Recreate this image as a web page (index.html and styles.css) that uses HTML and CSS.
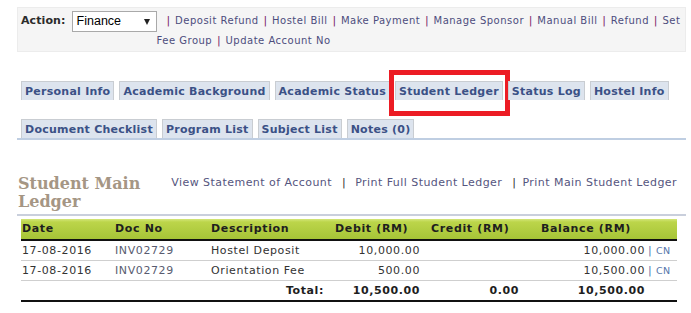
FILE: index.html
```html
<!DOCTYPE html>
<html>
<head>
<meta charset="utf-8">
<link rel="stylesheet" href="styles.css">
</head>
<body>
<div class="action-bar">
  <span class="action-label">Action:</span>
  <div class="select"><span>Finance</span><span class="arrow"></span></div>
  <div class="action-links"><span class="sep first">|</span><a>Deposit Refund</a><span class="sep">|</span><a>Hostel Bill</a><span class="sep">|</span><a>Make Payment</a><span class="sep">|</span><a>Manage Sponsor</a><span class="sep">|</span><a>Manual Bill</a><span class="sep">|</span><a>Refund</a><span class="sep">|</span><a>Set Fee Group</a><span class="sep">|</span><a>Update Account No</a></div>
</div>

<div class="tabs">
  <div class="tab-row">
    <span class="tab">Personal Info</span>
    <span class="tab">Academic Background</span>
    <span class="tab">Academic Status</span>
    <span class="tab highlighted">Student Ledger</span>
    <span class="tab">Status Log</span>
    <span class="tab">Hostel Info</span>
  </div>
  <div class="tab-row">
    <span class="tab">Document Checklist</span>
    <span class="tab">Program List</span>
    <span class="tab">Subject List</span>
    <span class="tab">Notes (0)</span>
  </div>
</div>

<div class="section-head">
  <h2 class="title">Student Main Ledger</h2>
  <div class="head-links"><a>View Statement of Account</a><span class="hsep">|</span><a>Print Full Student Ledger</a><span class="hsep2">|</span><a>Print Main Student Ledger</a></div>
</div>

<table class="ledger">
  <colgroup>
    <col class="c-date"><col class="c-doc"><col class="c-desc"><col class="c-debit"><col class="c-credit"><col class="c-bal"><col class="c-cn">
  </colgroup>
  <thead>
    <tr>
      <th class="hdate">Date</th>
      <th class="hdoc">Doc No</th>
      <th class="hdesc">Description</th>
      <th class="hdebit">Debit (RM)</th>
      <th class="hcredit">Credit (RM)</th>
      <th class="hbal">Balance (RM)</th>
      <th></th>
    </tr>
  </thead>
  <tbody>
    <tr>
      <td class="date">17-08-2016</td>
      <td class="doc">INV02729</td>
      <td class="desc">Hostel Deposit</td>
      <td class="num debit">10,000.00</td>
      <td class="num credit"></td>
      <td class="num bal">10,000.00</td>
      <td class="cn"><span class="cnsep">|</span>CN</td>
    </tr>
    <tr>
      <td class="date">17-08-2016</td>
      <td class="doc">INV02729</td>
      <td class="desc">Orientation Fee</td>
      <td class="num debit">500.00</td>
      <td class="num credit"></td>
      <td class="num bal">10,500.00</td>
      <td class="cn"><span class="cnsep">|</span>CN</td>
    </tr>
    <tr class="total">
      <td></td>
      <td></td>
      <td class="num tlabel">Total:</td>
      <td class="num debit">10,500.00</td>
      <td class="num credit">0.00</td>
      <td class="num bal">10,500.00</td>
      <td></td>
    </tr>
  </tbody>
</table>
</body>
</html>
```

FILE: styles.css
```css
html, body {
  margin: 0;
  padding: 0;
  background: #ffffff;
}

body {
  font-family: "DejaVu Sans", Verdana, sans-serif;
  font-size: 11px;
  color: #333333;
  width: 691px;
}

a {
  color: #50507c;
  text-decoration: none;
}

.action-bar {
  display: flex;
  align-items: flex-start;
  margin: 7px 5px 0 17px;
  height: 45px;
  box-sizing: border-box;
  padding: 3px 0 0 3px;
  background: #f5f5f5;
  border: 1px solid #ececec;
}

.action-label {
  font-weight: bold;
  color: #2b2b2b;
  line-height: 20px;
  letter-spacing: 0.1px;
}

.select {
  margin-left: 6px;
  width: 85px;
  height: 21px;
  box-sizing: border-box;
  border: 1px solid #a9a9a9;
  background: #ffffff;
  font-family: "Liberation Sans", Arial, sans-serif;
  font-size: 12.5px;
  line-height: 19px;
  color: #000000;
  padding-left: 4px;
  display: flex;
  justify-content: space-between;
  align-items: center;
}

.arrow {
  width: 0;
  height: 0;
  margin-right: 6px;
  border-left: 3.5px solid transparent;
  border-right: 3.5px solid transparent;
  border-top: 6px solid #222222;
}

.action-links {
  flex: 1;
  line-height: 20px;
  font-size: 10px;
  letter-spacing: 0.5px;
  padding-right: 0;
}

.action-links a {
  color: #4d4d7d;
  line-height: 13px;
}

.sep {
  color: #7b1f6b;
  margin: 0 4.8px;
  font-size: 11px;
  line-height: 13px;
  letter-spacing: 0;
}

.sep.first {
  margin-left: 10px;
}

.tabs {
  margin: 29px 5px 0 17px;
  padding-left: 4px;
  border-bottom: 2px solid #bfcee2;
}

.tab-row {
  display: flex;
  gap: 5px;
}

.tab-row + .tab-row {
  margin-top: 19px;
}

.tab {
  position: relative;
  height: 19px;
  box-sizing: border-box;
  padding: 0 3px 0 3px;
  background: #dde4ee;
  border: 1px solid #c9cdd2;
  border-bottom: none;
  font-weight: bold;
  font-size: 11px;
  letter-spacing: 0.25px;
  line-height: 19px;
  color: #3b5186;
  white-space: nowrap;
}

.highlighted::after {
  content: "";
  position: absolute;
  left: -7px;
  top: -12px;
  right: -8px;
  bottom: -16px;
  border: 5px solid #ec1c24;
}

.section-head {
  display: flex;
  align-items: flex-start;
  margin: 35px 5px 0 17px;
  padding-bottom: 3px;
  border-bottom: 2px solid #c9cfdc;
}

.title {
  margin: 0;
  width: 150px;
  padding-left: 1px;
  font-family: "DejaVu Serif", Georgia, serif;
  font-weight: bold;
  font-size: 16px;
  line-height: 18px;
  color: #a59684;
}

.head-links {
  flex: 1;
  text-align: right;
  padding-right: 9px;
  line-height: 16px;
  letter-spacing: 0.45px;
  white-space: nowrap;
}

.head-links a {
  color: #55557e;
}

.hsep {
  margin: 0 9px 0 10px;
  color: #333333;
}

.hsep2 {
  margin: 0 6px 0 10px;
  color: #333333;
}

.ledger {
  margin: 3px 0 0 21px;
  width: 656px;
  table-layout: fixed;
  border-collapse: separate;
  border-spacing: 0;
}

.c-date { width: 93px; }
.c-doc { width: 94px; }
.c-desc { width: 118px; }
.c-debit { width: 98px; }
.c-credit { width: 100px; }
.c-bal { width: 121px; }
.c-cn { width: 32px; }

.ledger th {
  padding: 0;
  line-height: 20px;
  background: linear-gradient(#d3e679 0px, #bcd54a 3px, #a6c437 100%);
  border-bottom: 2px solid #111111;
  font-weight: bold;
  font-size: 11px;
  letter-spacing: 0.65px;
  color: #1e1e1e;
  text-align: left;
  white-space: nowrap;
}

.ledger th.hdate { padding-left: 1px; }
.ledger th.hdoc { padding-left: 1px; }
.ledger th.hdesc { padding-left: 3px; }
.ledger th.hdebit { padding-left: 9px; }
.ledger th.hcredit { padding-left: 7px; }
.ledger th.hbal { padding-left: 17px; }

.ledger td {
  padding: 0;
  line-height: 19px;
  border-bottom: 1px solid #cfcfcf;
  font-size: 11px;
  letter-spacing: 0.6px;
  color: #333333;
  white-space: nowrap;
}

.ledger td.date { padding-left: 1px; }
.ledger td.doc { padding-left: 1px; color: #585c70; }
.ledger td.desc { padding-left: 3px; }

.ledger td.num { text-align: right; }
.ledger td.debit { padding-right: 4px; }
.ledger td.credit { padding-right: 5px; }
.ledger td.bal { padding-right: 0; }
.ledger td.tlabel { padding-right: 2px; }

.ledger td.cn {
  font-size: 9.5px;
  letter-spacing: 0.3px;
  color: #5576ab;
}

.cnsep {
  margin: 0 4px 0 3px;
  color: #5576ab;
  font-size: 11px;
}

.ledger tr.total td {
  font-weight: bold;
  color: #1e1e1e;
  border-bottom: 2px solid #111111;
}
```
